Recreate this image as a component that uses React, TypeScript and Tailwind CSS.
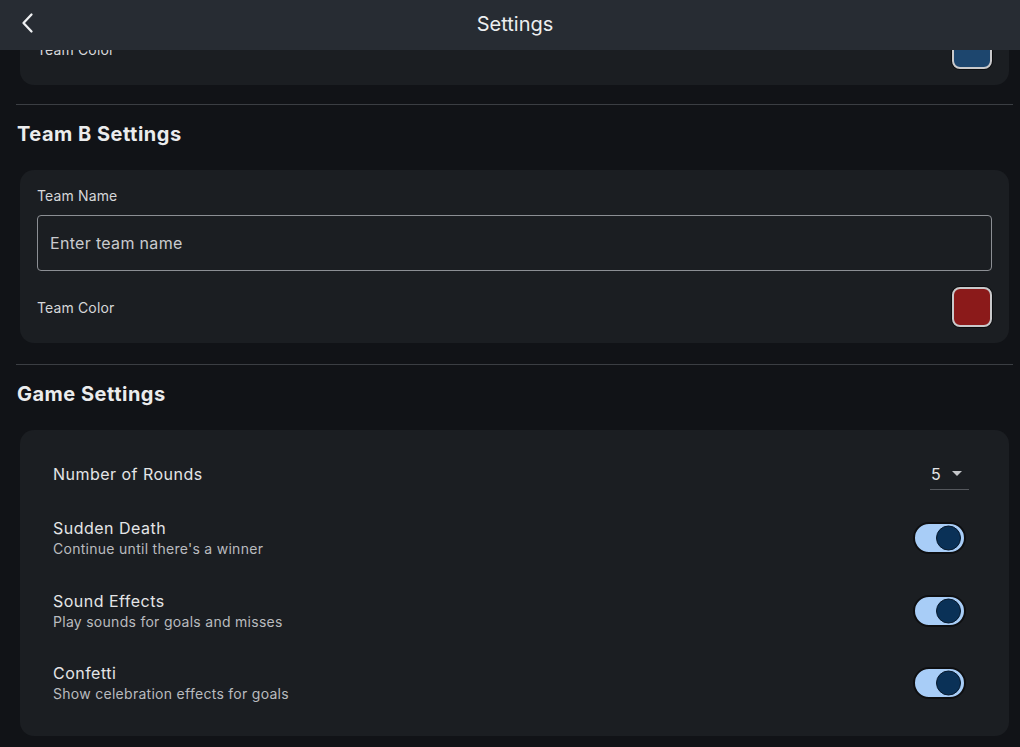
import React from "react";

const font = { fontFamily: "Inter, 'Noto Sans', sans-serif" };

function Toggle() {
  return (
    <div className="relative mr-[3px] h-[32px] w-[53px] rounded-full border-2 border-[#0e0f11] bg-[#a8cdf7]">
      <div className="absolute right-[3px] top-1/2 h-[25px] w-[25px] -translate-y-1/2 rounded-full border border-[#06182b] bg-[#0a3157]" />
    </div>
  );
}

function ToggleRow({ title, subtitle }: { title: string; subtitle: string }) {
  return (
    <div className="flex h-[72.5px] items-center justify-between pl-[17px] pr-[24px]">
      <div className="flex flex-col">
        <span className="text-[16px] leading-[22px] tracking-[0.03em] text-[#e4e5e7]">{title}</span>
        <span className="text-[14px] leading-[20px] tracking-[0.02em] text-[#b9bbbf]">{subtitle}</span>
      </div>
      <Toggle />
    </div>
  );
}

function TeamCard({ swatch, className = "" }: { swatch: string; className?: string }) {
  return (
    <div className={`ml-[4px] mr-[4px] rounded-[14px] bg-[#1b1e22] px-[17px] pb-[16px] pt-[16px] ${className}`}>
      <div className="text-[14px] leading-[20px] tracking-[0.01em] text-[#d6d7d9]">Team Name</div>
      <div className="mt-[9px] flex h-[56px] items-center rounded-[4px] border border-[#8c8f94] px-[12px]">
        <span className="text-[16px] tracking-[0.02em] text-[#c9cbce]">Enter team name</span>
      </div>
      <div className="mt-[16px] flex h-[40px] items-center justify-between">
        <span className="text-[14px] tracking-[0.01em] text-[#d6d7d9]">Team Color</span>
        <div className="h-[40px] w-[40px] rounded-[8px] border-2 border-[#c9c9cb] shadow-[0_0_0_1px_#0c0d0f]" style={{ backgroundColor: swatch }} />
      </div>
    </div>
  );
}

function SectionHeader({ title, gap }: { title: string; gap: string }) {
  return (
    <>
      <div className={`${gap} h-px bg-[#3b3e43]`} />
      <div className="pb-[24px] pl-[1px] pt-[17px] text-[20px] font-bold leading-[24px] tracking-[0.025em] text-[#ebeced]">{title}</div>
    </>
  );
}

export default function App() {
  return (
    <div className="relative h-[747px] w-[1020px] overflow-hidden bg-[#111317]" style={font}>
      <div className="pl-[16px] pr-[7px]">
        <TeamCard swatch="#1d466e" className="-mt-[88px]" />
        <SectionHeader title="Team B Settings" gap="mt-[19px]" />
        <TeamCard swatch="#8b1a1a" />
        <SectionHeader title="Game Settings" gap="mt-[21px]" />
        <div className="ml-[4px] mr-[4px] rounded-[14px] bg-[#1b1e22] px-[16px] pb-[16px] pt-[16px]">
          <div className="flex h-[56px] items-center justify-between pl-[17px] pr-[24px]">
            <span className="text-[16px] tracking-[0.03em] text-[#e4e5e7]">Number of Rounds</span>
            <div className="flex h-[32px] w-[39px] items-center justify-between border-b border-[#55585d] pl-[1px] pr-[7px]">
              <span className="text-[16px] text-[#e4e5e7]">5</span>
              <svg width="10" height="5" viewBox="0 0 10 5">
                <path d="M0 0 L10 0 L5 5 Z" fill="#c4c6c9" />
              </svg>
            </div>
          </div>
          <ToggleRow title="Sudden Death" subtitle="Continue until there's a winner" />
          <ToggleRow title="Sound Effects" subtitle="Play sounds for goals and misses" />
          <ToggleRow title="Confetti" subtitle="Show celebration effects for goals" />
        </div>
      </div>

      <div className="absolute left-0 right-0 top-0 flex h-[50px] items-center justify-center bg-[#272c33]">
        <svg className="absolute left-[20px] top-[12px]" width="16" height="22" viewBox="0 0 16 22">
          <path d="M11.5 2.5 L3.5 11 L11.5 19.5" fill="none" stroke="#eef0f2" strokeWidth="2.3" strokeLinecap="round" strokeLinejoin="round" />
        </svg>
        <span className="mb-[3px] pl-[10px] text-[20px] text-[#eceef0]">Settings</span>
      </div>
    </div>
  );
}
